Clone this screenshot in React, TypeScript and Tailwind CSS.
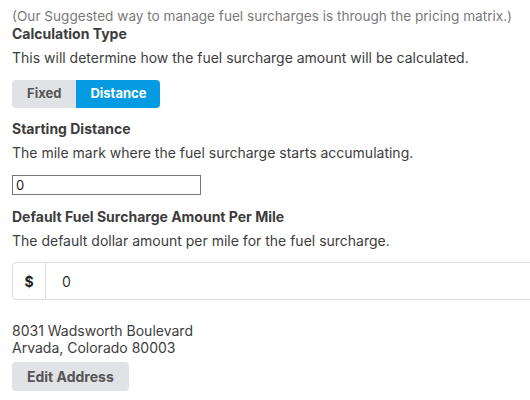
import React from "react";

const App = () => {
  return (
    <div className="min-h-[400px] bg-white px-3 font-['Inter',sans-serif] text-[14px] text-[#3d3d3d]">
      <p className="whitespace-nowrap pt-[8px] text-[13.6px] leading-[17px] text-[#7a7a7a]">
        (Our Suggested way to manage fuel surcharges is through the pricing matrix.)
      </p>
      <h3 className="font-bold leading-[17px]">Calculation Type</h3>
      <p className="mt-[6px] leading-[20px]">
        This will determine how the fuel surcharge amount will be calculated.
      </p>

      <div className="mt-[12px] flex">
        <button className="h-[28px] rounded-l-[4px] bg-[#e1e2e5] px-[15px] text-[13px] font-bold text-[#555]">
          Fixed
        </button>
        <button className="h-[28px] rounded-r-[4px] bg-[#049be3] px-[14px] text-[13px] font-bold text-white">
          Distance
        </button>
      </div>

      <h3 className="mt-[12px] font-bold leading-[17px]">Starting Distance</h3>
      <p className="mt-[6px] leading-[20px]">
        The mile mark where the fuel surcharge starts accumulating.
      </p>
      <input
        className="mt-[12px] h-[20px] w-[189px] border border-[#767676] px-[3px] text-[13px] text-[#222] outline-none"
        defaultValue="0"
      />

      <h3 className="mt-[13px] font-bold leading-[17px]">Default Fuel Surcharge Amount Per Mile</h3>
      <p className="mt-[6px] leading-[20px]">
        The default dollar amount per mile for the fuel surcharge.
      </p>
      <div className="mt-[11px] flex h-[38px] w-[530px] rounded-[4px] border border-[#dcdcdc]">
        <span className="flex w-[33px] items-center justify-center border-r border-[#dcdcdc] font-bold text-[#222]">
          $
        </span>
        <input className="flex-1 pl-[16px] text-[14px] text-[#333] outline-none" defaultValue="0" />
      </div>

      <div className="mt-[22px] leading-[17px]">
        <p>8031 Wadsworth Boulevard</p>
        <p>Arvada, Colorado 80003</p>
      </div>
      <button className="mt-[6px] h-[29px] rounded-[4px] bg-[#e1e2e5] px-[15px] text-[14px] font-bold text-[#555]">
        Edit Address
      </button>
    </div>
  );
};

export default App;
